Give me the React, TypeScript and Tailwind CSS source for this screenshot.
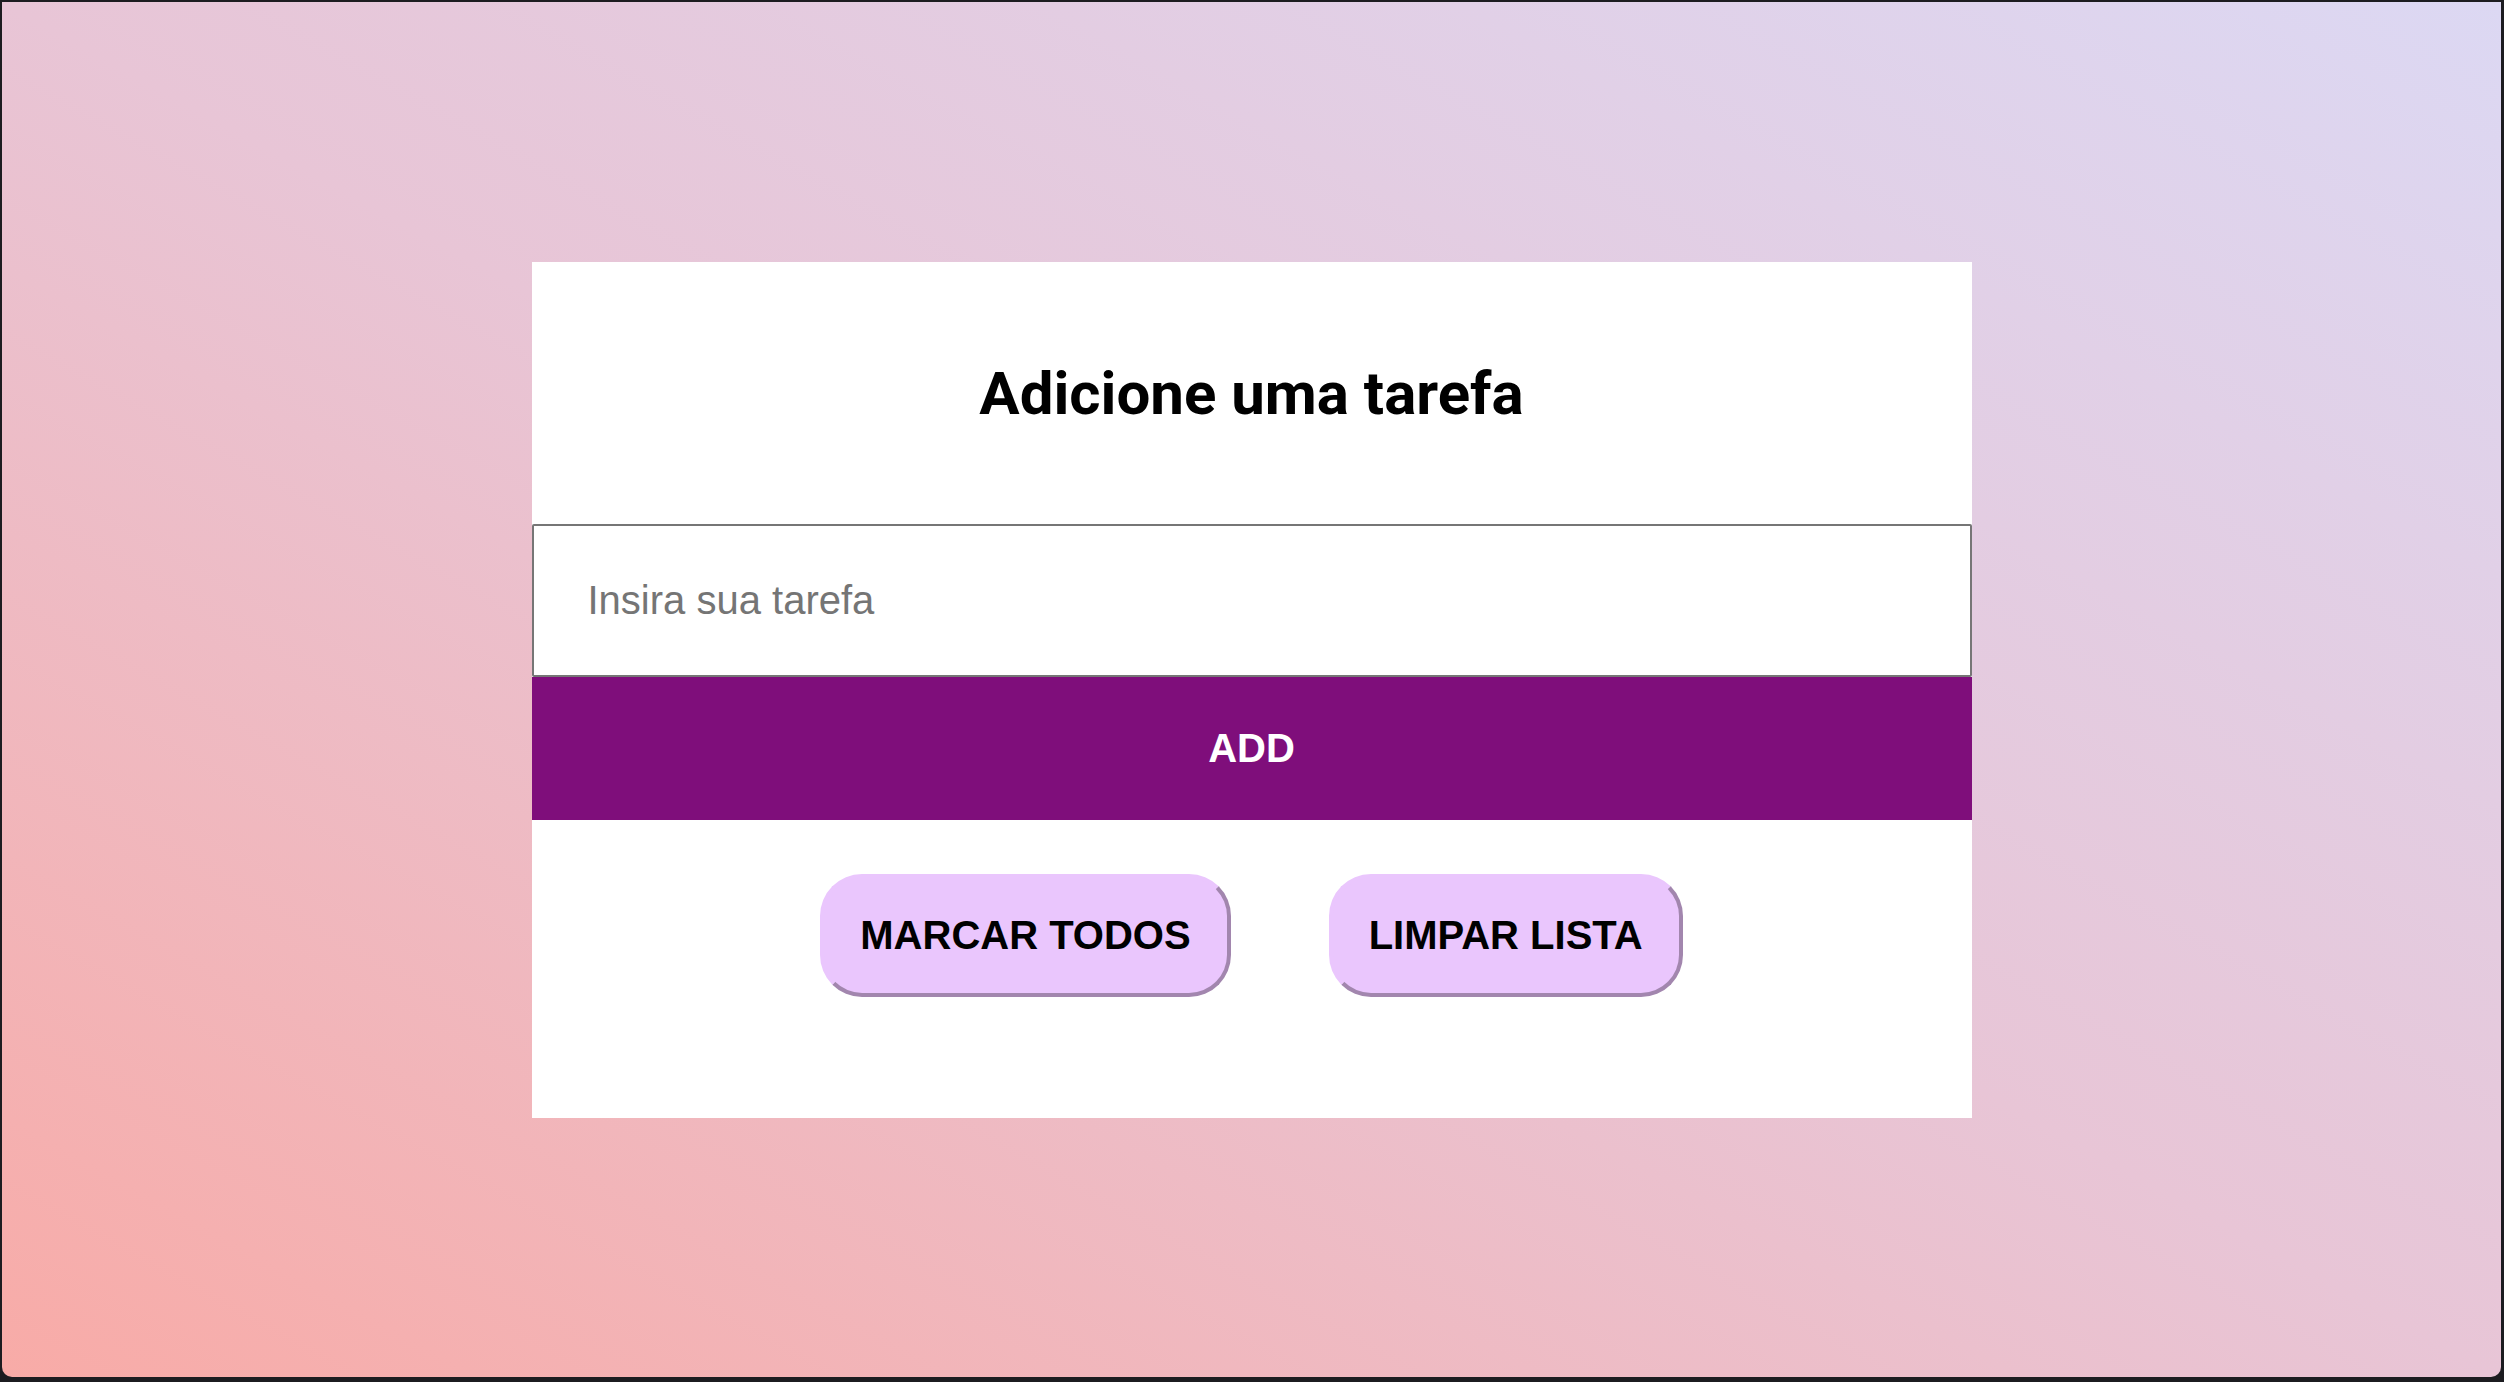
export default function App() {
  return (
    <div className="h-screen w-full bg-[#1c1c20] pt-[2px] pl-[2px] pr-[3px] pb-[5px]">
      <div className="flex h-full w-full items-center justify-center rounded-b-[10px] bg-[linear-gradient(to_top_right,#f8aba7,#e8c5d6_50%,#dcd8f3)]">
        <div className="flex h-[856px] w-[1440px] flex-col items-center bg-white">
          <h1 className="mt-[102px] font-['Roboto',sans-serif] text-[60px] font-bold leading-none text-black">
            Adicione uma tarefa
          </h1>

          <input
            type="text"
            placeholder="Insira sua tarefa"
            className="mt-[100px] h-[153px] w-full rounded-[2px] border-2 border-[#767676] bg-white pl-[54px] font-['Liberation_Sans',Arial,sans-serif] text-[40px] text-black outline-none placeholder:text-[#757575]"
          />

          <button className="h-[143px] w-full bg-[#7f0e7b] font-['Liberation_Sans',Arial,sans-serif] text-[40px] font-bold text-white">
            ADD
          </button>

          <div className="mt-[54px] flex gap-[98px]">
            <button className="h-[123px] rounded-[42px] border-4 border-t-[#eac6fd] border-l-[#eac6fd] border-r-[#a286ae] border-b-[#a286ae] bg-[#eac6fd] px-[36px] font-['Liberation_Sans',Arial,sans-serif] text-[40px] font-bold text-black">
              MARCAR TODOS
            </button>
            <button className="h-[123px] rounded-[42px] border-4 border-t-[#eac6fd] border-l-[#eac6fd] border-r-[#a286ae] border-b-[#a286ae] bg-[#eac6fd] px-[36px] font-['Liberation_Sans',Arial,sans-serif] text-[40px] font-bold text-black">
              LIMPAR LISTA
            </button>
          </div>
        </div>
      </div>
    </div>
  );
}
